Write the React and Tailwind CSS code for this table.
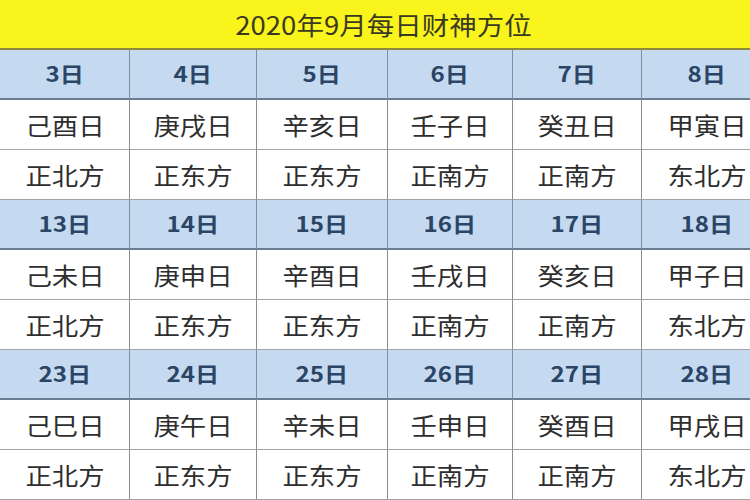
import React from 'react';

const groups = [
  {
    days: ['3日', '4日', '5日', '6日', '7日', '8日'],
    ganzhi: ['己酉日', '庚戌日', '辛亥日', '壬子日', '癸丑日', '甲寅日'],
  },
  {
    days: ['13日', '14日', '15日', '16日', '17日', '18日'],
    ganzhi: ['己未日', '庚申日', '辛酉日', '壬戌日', '癸亥日', '甲子日'],
  },
  {
    days: ['23日', '24日', '25日', '26日', '27日', '28日'],
    ganzhi: ['己巳日', '庚午日', '辛未日', '壬申日', '癸酉日', '甲戌日'],
  },
];

const directions = ['正北方', '正东方', '正东方', '正南方', '正南方', '东北方'];

const font = { fontFamily: '"Noto Sans CJK SC", "Noto Sans", sans-serif' };

const Cell = ({ children, header }) => (
  <div
    className={
      header
        ? 'h-[50px] flex items-center justify-center bg-[#c5daf0] border-r border-r-[#7f8fa2] border-b-2 border-b-[#6a7d93]'
        : 'h-[50px] flex items-center justify-center bg-white border-r border-r-[#8c8c8c] border-b border-b-[#a5a5a5]'
    }
  >
    {header ? (
      <span className="inline-block scale-x-115 text-[21px] font-bold text-[#2a4565]">{children}</span>
    ) : (
      <span className="inline-block scale-x-110 text-[24px] text-[#2e2e2e]">{children}</span>
    )}
  </div>
);

const App = () => {
  return (
    <div className="w-[750px] h-[500px] overflow-hidden bg-white" style={font}>
      <div className="h-[50px] bg-[#f9f41c] border-b-2 border-b-[#8d8a3a] flex items-center justify-center">
        <span className="inline-block scale-x-110 text-[25px] text-[#3a3a22] pl-[16px] pt-[2px]">2020年9月每日财神方位</span>
      </div>
      <div className="grid grid-cols-[130px_127px_131px_125px_129px_130px] w-[780px]">
        {groups.map((g, i) => (
          <React.Fragment key={i}>
            {g.days.map((d) => (
              <Cell key={d} header>{d}</Cell>
            ))}
            {g.ganzhi.map((t) => (
              <Cell key={t}>{t}</Cell>
            ))}
            {directions.map((t, j) => (
              <Cell key={`${i}-${j}`}>{t}</Cell>
            ))}
          </React.Fragment>
        ))}
      </div>
    </div>
  );
};

export default App;
